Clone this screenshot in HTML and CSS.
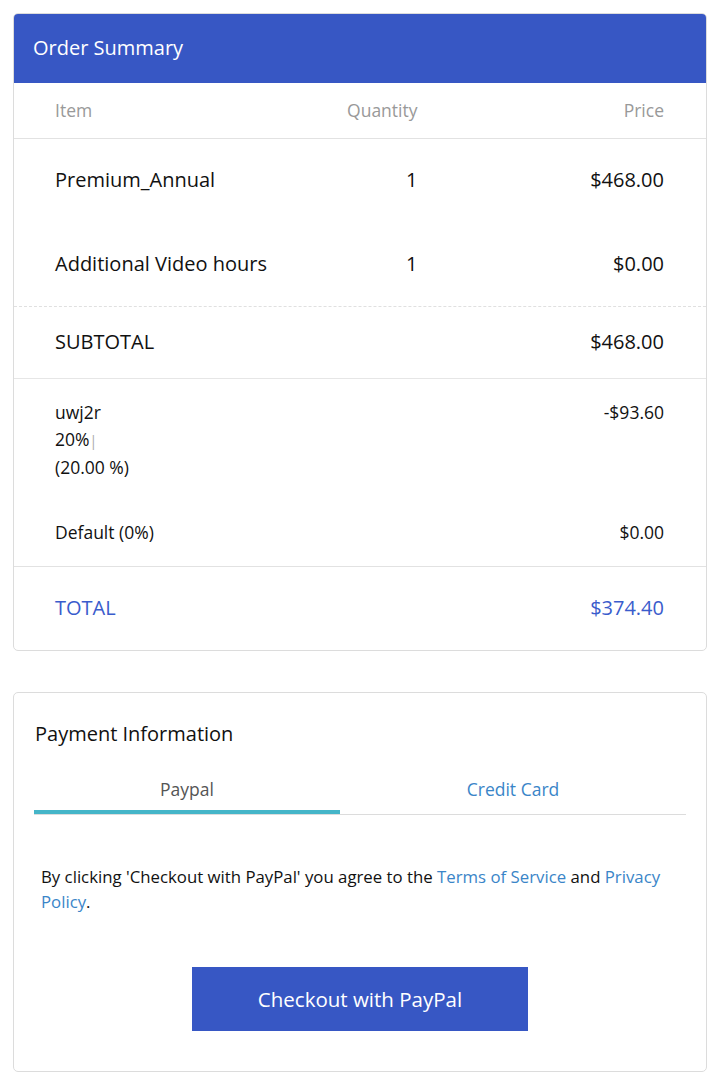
FILE: index.html
```html
<!DOCTYPE html>
<html>
<head>
<meta charset="utf-8">
<link rel="stylesheet" href="styles.css">
</head>
<body>
<div class="page">
  <section class="card summary">
    <div class="card-head">Order Summary</div>
    <div class="row head-row">
      <div class="c-item">Item</div>
      <div class="c-qty">Quantity</div>
      <div class="c-price">Price</div>
    </div>
    <div class="items">
      <div class="row item-row">
        <div class="c-item">Premium_Annual</div>
        <div class="c-qty">1</div>
        <div class="c-price">$468.00</div>
      </div>
      <div class="row item-row">
        <div class="c-item">Additional Video hours</div>
        <div class="c-qty">1</div>
        <div class="c-price">$0.00</div>
      </div>
    </div>
    <div class="row subtotal-row">
      <div class="c-item">SUBTOTAL</div>
      <div class="c-price">$468.00</div>
    </div>
    <div class="adjust">
      <div class="row adj-row">
        <div class="c-item">uwj2r<br>20%<span class="bar">|</span><br>(20.00 %)</div>
        <div class="c-price">-$93.60</div>
      </div>
      <div class="row adj-row tax">
        <div class="c-item">Default (0%)</div>
        <div class="c-price">$0.00</div>
      </div>
    </div>
    <div class="row total-row">
      <div class="c-item">TOTAL</div>
      <div class="c-price">$374.40</div>
    </div>
  </section>

  <section class="card payment">
    <h2 class="pay-title">Payment Information</h2>
    <div class="tabs">
      <div class="tab active">Paypal</div>
      <div class="tab link">Credit Card</div>
    </div>
    <p class="agree">By clicking 'Checkout with PayPal' you agree to the <a href="#">Terms of Service</a> and <a href="#">Privacy Policy</a>.</p>
    <div class="btn-wrap">
      <button class="checkout">Checkout with PayPal</button>
    </div>
  </section>
</div>
</body>
</html>
```

FILE: styles.css
```css
* { box-sizing: border-box; }
html, body { margin: 0; padding: 0; background: #fff; }
body {
  font-family: "Open Sans", Lato, sans-serif;
  color: #111;
}
.page {
  padding: 13px 13px 10px 13px;
  display: flex;
  flex-direction: column;
  gap: 41px;
}
.card {
  border: 1px solid #dcdcdc;
  border-radius: 5px;
  background: #fff;
}
.summary { overflow: hidden; }
.card-head {
  background: #3757c4;
  color: #fff;
  height: 70px;
  display: flex;
  align-items: center;
  padding-left: 20px;
  padding-bottom: 2px;
  font-size: 20px;
  margin: -1px -1px 0 -1px;
}
.row {
  display: grid;
  grid-template-columns: 1fr 116px 1fr;
  padding: 0 42px 0 41px;
  align-items: center;
}
.c-qty { text-align: right; grid-column: 2; }
.c-price { text-align: right; grid-column: 3; }
.c-item { grid-column: 1; }
.head-row {
  height: 56px;
  color: #999;
  font-size: 17.5px;
  padding-bottom: 1px;
  border-bottom: 1px solid #e2e2e2;
}
.items {
  border-bottom: 1px dashed #e0e0e0;
}
.item-row {
  height: 83.5px;
  font-size: 20px;
  padding-bottom: 2px;
}
.subtotal-row {
  height: 72px;
  font-size: 20px;
  padding-bottom: 2px;
  border-bottom: 1px solid #e6e6e6;
}
.adjust {
  border-bottom: 1px solid #e2e2e2;
  padding: 20px 0 20px;
}
.adj-row {
  font-size: 17.5px;
  line-height: 27px;
  align-items: start;
}
.adj-row.tax { margin-top: 38px; }
.bar { color: #aaa; font-size: 14px; }
.total-row {
  height: 83px;
  font-size: 20px;
  padding-bottom: 2px;
  color: #3a5ccc;
}
.payment {
  padding: 28px 20px 40px 20px;
}
.pay-title {
  font-weight: normal;
  font-size: 20px;
  margin: 0 0 0 1px;
  line-height: 26px;
  color: #111;
}
.tabs {
  display: flex;
  margin-top: 22px;
  border-bottom: 1px solid #dcdcdc;
}
.tab {
  flex: 0 0 306px;
  text-align: center;
  font-size: 17.5px;
  height: 45px;
  line-height: 40px;
  color: #555;
}
.tab.active {
  border-bottom: 4px solid #45b5c8;
  margin-bottom: -1px;
}
.tab.link { flex: 1; color: #3a85c8; }
.agree {
  margin: 49px 0 0 7px;
  font-size: 16.8px;
  line-height: 25px;
  color: #111;
}
.agree a { color: #3a85c8; text-decoration: none; }
.btn-wrap {
  display: flex;
  justify-content: center;
  margin-top: 53px;
}
.checkout {
  width: 336px;
  height: 64px;
  background: #3757c4;
  color: #fff;
  border: none;
  font-family: inherit;
  font-size: 20.5px;
}
```
